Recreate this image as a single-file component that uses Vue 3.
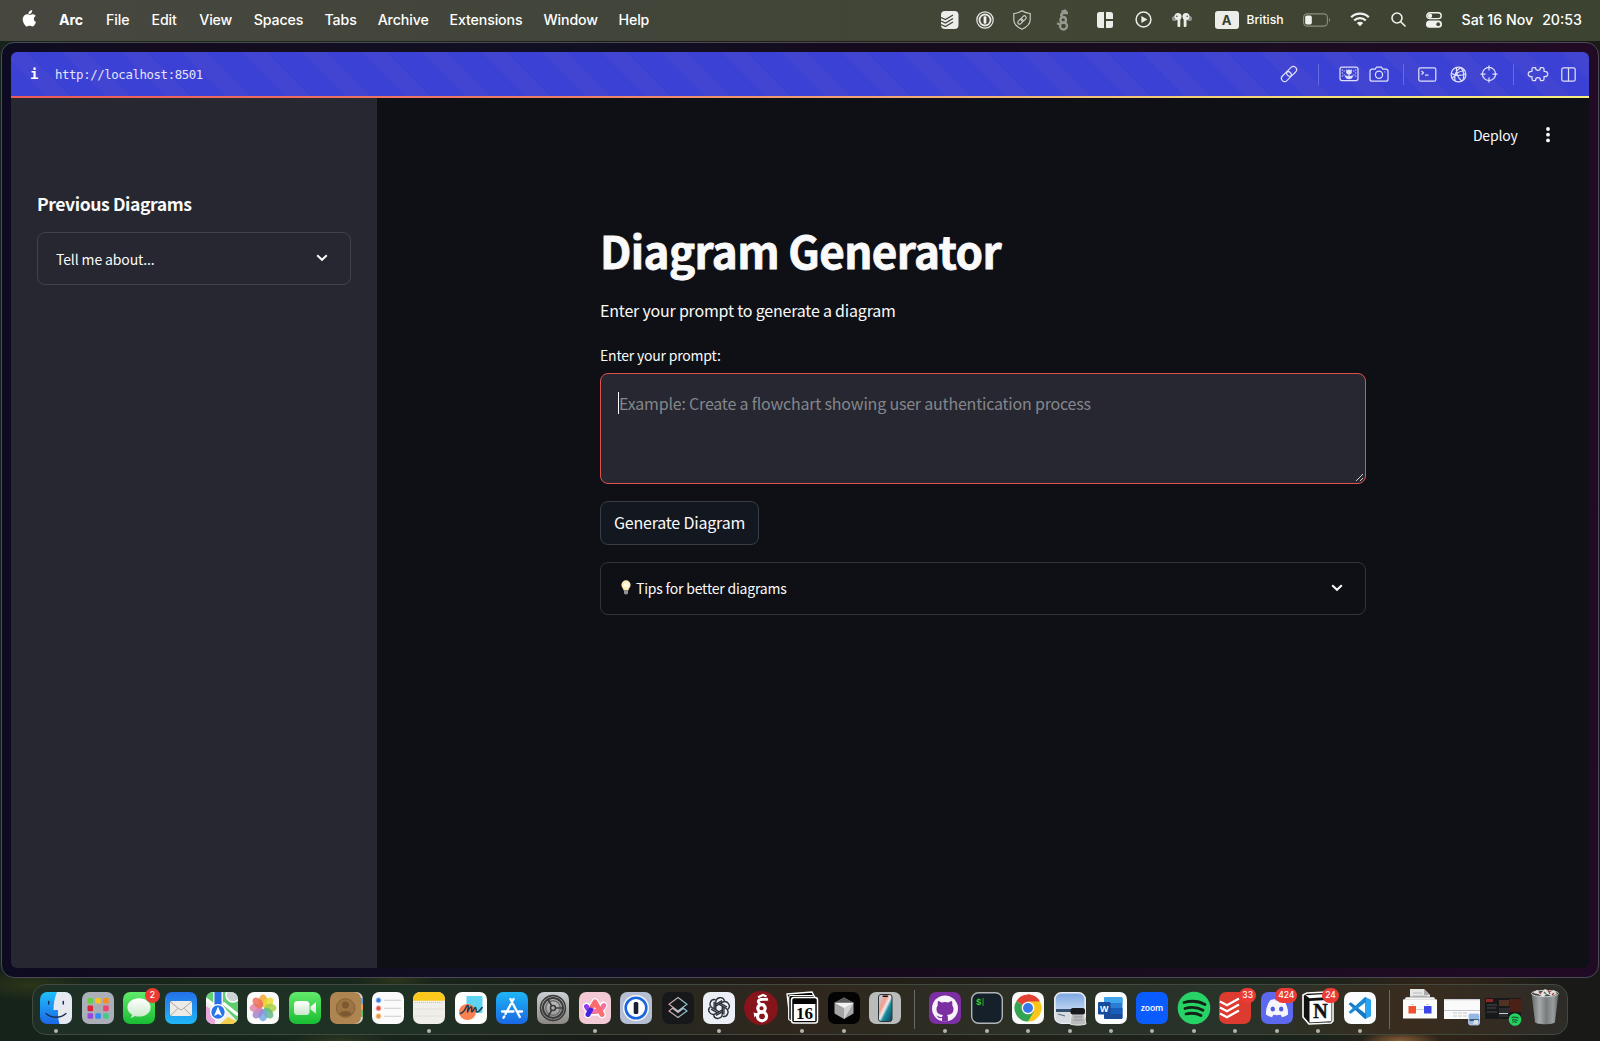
<script setup>
const menus = [
  { label: 'Arc', width: 47, bold: true },
  { label: 'File', width: 45.5 },
  { label: 'Edit', width: 47.7 },
  { label: 'View', width: 54.5 },
  { label: 'Spaces', width: 70.8 },
  { label: 'Tabs', width: 53.2 },
  { label: 'Archive', width: 71.8 },
  { label: 'Extensions', width: 94 },
  { label: 'Window', width: 75 },
  { label: 'Help', width: 40 },
]
const petals = [
  ['#f5a623', 0], ['#e9d92f', 45], ['#a6cf3c', 90], ['#5cb77c', 135],
  ['#6fa5df', 180], ['#9b7fd0', 225], ['#dd7fa8', 270], ['#ee6850', 315],
]
const pads = ['#62cf45', '#f8c02b', '#f98d24', '#d92338', '#a8acb2', '#f3426e', '#9848dc', '#2f8df5', '#43c989']
</script>

<template>
  <div class="desktop">
    <header class="menubar">
      <svg class="apple" width="16" height="20" viewBox="0 0 16 20"><path fill="#fff" d="M11.2 1c.1 1.200-.4 2.300-1 3-.7.8-1.700 1.300-2.700 1.200-.1-1.100.4-2.200 1-2.900C9.200 1.600 10.300 1.100 11.200 1zM14.600 7.100c-1 .6-1.700 1.600-1.700 2.800 0 1.400.9 2.600 2.100 3.100-.3.9-.7 1.700-1.200 2.400-.7 1-1.400 2-2.500 2s-1.400-.6-2.600-.6-1.600.6-2.600.7c-1.100 0-1.900-1.100-2.600-2.100C1.900 13.100.9 9.500 2.700 7.300c.8-1.300 2-2 3.300-2 1.200 0 2 .7 3 .7.9 0 1.900-.8 3.300-.7.9.1 1.800.6 2.300 1.800z"/></svg>
      <nav class="menus">
        <span v-for="m in menus" :key="m.label" :class="{ strong: m.bold }" :style="{ width: m.width + 'px' }">{{ m.label }}</span>
      </nav>
      <div class="status">
        <svg class="st" width="18" height="18" viewBox="0 0 18 18"><rect width="17.500" height="18" rx="4" fill="#ececea"/><path d="M0 6.500l4.500 2L12 4M0 10l4.500 2L12 7.500M0 13.500l4.500 2L12 11" fill="none" stroke="#43463a" stroke-width="1.300"/></svg>
        <svg class="st" width="18" height="18" viewBox="0 0 18 18"><circle cx="9" cy="9" r="8.200" fill="none" stroke="#e8e9e4" stroke-width="1.200"/><circle cx="9" cy="9" r="6.500" fill="#e8e9e4"/><circle cx="9" cy="9" r="4.600" fill="#43463a"/><rect x="7.600" y="5.200" width="2.800" height="7.600" rx="1" fill="#f4f4f0"/></svg>
        <svg class="st" width="20" height="20" viewBox="0 0 20 20" fill="none" stroke="#d2d4cb" stroke-width="1.100"><path d="M10 .8c2.500 1.700 5 2.500 8.200 2.700v6c0 4.500-3.200 7.500-8.200 9.700C5 17 1.800 14 1.800 9.500v-6C5 3.300 7.500 2.500 10 .8z"/><g transform="rotate(-45 10 10)"><rect x="4.800" y="8.200" width="6" height="3.600" rx="1.800"/><rect x="9.200" y="8.200" width="6" height="3.600" rx="1.800"/></g></svg>
        <svg class="st" width="14" height="22" viewBox="0 0 14 22" fill="none" stroke="#969a8e" stroke-width="2.300"><circle cx="7.500" cy="17" r="3.500"/><circle cx="7.200" cy="11" r="2.800"/><path d="M9.500 8.300C4 8 4 4.200 7.500 4.200h4.500M5.500 2.800L9 1.500l2 2M1 14.300l3.500 1.500"/></svg>
        <svg class="st" width="16" height="16" viewBox="0 0 16 16" fill="#ecede8"><path d="M2.500 0H7v16H2.500A2.500 2.500 0 010 13.500v-11A2.500 2.500 0 012.500 0zM9 0h4.500A2.500 2.500 0 0116 2.500V7H9zM9 9h7v4.500a2.500 2.500 0 01-2.500 2.500H9z"/></svg>
        <svg class="st" width="17" height="17" viewBox="0 0 17 17"><circle cx="8.500" cy="8.500" r="7.400" fill="none" stroke="#ecede8" stroke-width="1.500"/><path d="M6.400 5l6 3.500-6 3.500z" fill="#ecede8"/></svg>
        <svg class="st" width="22" height="16" viewBox="0 0 22 16"><circle cx="3.500" cy="6.500" r="2.600" fill="#8f9288"/><circle cx="18.500" cy="6.500" r="2.600" fill="#8f9288"/><g fill="#ecede8"><circle cx="7" cy="4.500" r="3.500"/><rect x="6.500" y="4.500" width="2.800" height="10.500" rx="1"/><circle cx="15" cy="4.500" r="3.500"/><rect x="12.700" y="4.500" width="2.800" height="10.500" rx="1"/></g><circle cx="5.800" cy="4.200" r=".8" fill="#43463a"/><circle cx="16.200" cy="4.200" r=".8" fill="#43463a"/></svg>
        <span class="lang">A</span>
        <span class="british">British</span>
        <svg class="st" width="28" height="14" viewBox="0 0 28 14"><rect x=".6" y=".9" width="23.800" height="12.200" rx="3.600" fill="none" stroke="#8b8e80" stroke-width="1.100"/><rect x="2.200" y="2.600" width="6.600" height="8.800" rx="1.600" fill="#f1f2ee"/><path d="M26 5v4c1.400-.6 1.400-3.400 0-4z" fill="#8b8e80"/></svg>
        <svg class="st" width="20" height="15" viewBox="0 0 20 15" fill="none" stroke="#f1f2ee" stroke-width="2.300"><path d="M1.200 5.300a12.400 12.400 0 0117.600 0M4.200 8.500a8.200 8.200 0 0111.600 0"/><path d="M6.800 11a4.600 4.600 0 016.400 0L10 14.300z" fill="#f1f2ee" stroke="none"/></svg>
        <svg class="st" width="15" height="15" viewBox="0 0 15 15" fill="none" stroke="#f1f2ee" stroke-width="1.600"><circle cx="6" cy="6" r="5"/><path d="M9.700 9.700l4.300 4.300" stroke-linecap="round"/></svg>
        <svg class="st" width="16" height="16" viewBox="0 0 16 16"><rect x=".8" y=".8" width="14.400" height="5.800" rx="2.900" fill="none" stroke="#f1f2ee" stroke-width="1.400"/><circle cx="4" cy="3.700" r="2.200" fill="#f1f2ee"/><rect y="8.600" width="16" height="7.200" rx="3.600" fill="#f1f2ee"/><circle cx="12.200" cy="12.200" r="1.900" fill="#43463a"/></svg>
        <span class="clock"><span>Sat 16 Nov</span><span>20:53</span></span>
      </div>
    </header>

    <main class="window">
      <div class="page">
        <div class="toolbar">
          <span class="info">i</span>
          <span class="url">http://localhost:8501</span>
          <div class="tools">
            <svg width="18" height="18" viewBox="0 0 18 18" class="t1"><g transform="rotate(-45 9 9)"><rect x="-.3" y="5.800" width="11.200" height="6.400" rx="3.200"/><rect x="7.100" y="5.800" width="11.200" height="6.400" rx="3.200"/></g></svg>
            <i class="bar"></i>
            <svg width="20" height="16" viewBox="0 0 20 16" class="t2"><rect x="1" y="1" width="18" height="13.600" rx="2"/><path d="M10 8v5M10 12.500c-2 0-3-1-3.500-2.500 2 0 3 .8 3.500 2.500 .5-1.700 1.500-2.500 3.500-2.500-.5 1.500-1.500 2.500-3.500 2.500"/><path d="M7.200 3.200L9 4.300l1-1.300 1 1.300 1.800-1.100v3c0 1.400-1 2-2.800 2s-2.800-.6-2.800-2z" fill="#e3e4fb" stroke="none"/><path d="M3.400 3.500v9M16.600 3.500v9" stroke-dasharray="1 2"/><path d="M5.200 4.500v8M14.800 4.500v8" stroke-dasharray="1 3"/></svg>
            <svg width="20" height="16" viewBox="0 0 20 16" class="t3"><path d="M3 3.200h3.200L7.600 1h4.800l1.400 2.200H17a2 2 0 012 2v8a2 2 0 01-2 2H3a2 2 0 01-2-2v-8a2 2 0 012-2z"/><circle cx="10" cy="8.800" r="3.600"/><path d="M15.500 5.800h.8"/></svg>
            <i class="bar"></i>
            <svg width="19" height="15" viewBox="0 0 19 15" class="t4"><rect x=".8" y=".8" width="17" height="13.400" rx="1.800"/><path d="M3.500 4l2 1.700-2 1.700M7 8h3.500"/></svg>
            <svg width="17" height="17" viewBox="0 0 17 17" class="t5"><circle cx="8.500" cy="8.500" r="7.400"/><path d="M6.500 1.400c-.6 5 1.500 10.500 5.500 13.800M10.500 1.400C6 4.500 4 9.500 5 15M1.200 7.200c5 2.800 9.800 2.800 14.500.6M2.200 12.500c3-5 8-7.500 12-8M10.500 1.400c3.500 3.500 4 8 2.500 12.500"/></svg>
            <svg width="18" height="18" viewBox="0 0 18 18" class="t6"><circle cx="9" cy="9" r="6.600"/><path d="M9 .5v5M9 12.500v5M.5 9h5M12.500 9h5"/></svg>
            <i class="bar"></i>
            <svg width="22" height="16" viewBox="0 0 22 16" class="t7"><path d="M6.500 1.500h2c0 2 .8 2.800 2.500 2.800s2.500-.8 2.500-2.800h2c1 0 1.500.6 1.500 1.600v2.200c2.200-.2 3.800.8 3.800 2.700s-1.600 2.900-3.800 2.700v2.200c0 1-.5 1.600-1.500 1.600h-2c0-2-.8-2.800-2.500-2.800s-2.500.8-2.500 2.800h-2c-1 0-1.500-.6-1.500-1.600v-2.200C2.800 10.900 1.200 9.900 1.200 8S2.800 5.100 5 5.300V3.100c0-1 .5-1.600 1.500-1.600z"/></svg>
            <svg width="15" height="15" viewBox="0 0 15 15" class="t8"><rect x=".8" y=".8" width="13.400" height="13.400" rx="1.800"/><path d="M7.500 1v13"/></svg>
          </div>
        </div>
        <div class="progress"></div>

        <div class="body">
          <aside class="sidebar">
            <h3>Previous Diagrams</h3>
            <div class="expander">
              <span class="tell">Tell me about...</span>
              <svg width="12" height="8" viewBox="0 0 12 8"><path d="M1.200 1.200L6 5.800l4.800-4.600"/></svg>
            </div>
          </aside>
          <section class="content">
            <div class="topbar">
              <span class="deploy">Deploy</span>
              <svg width="4" height="16" viewBox="0 0 4 16"><circle cx="2" cy="2" r="1.900"/><circle cx="2" cy="7.700" r="1.900"/><circle cx="2" cy="13.400" r="1.900"/></svg>
            </div>
            <div class="column">
              <h1>Diagram Generator</h1>
              <p>Enter your prompt to generate a diagram</p>
              <label>Enter your prompt:</label>
              <div class="area">
                <i class="caret"></i><span>Example: Create a flowchart showing user authentication process</span>
                <svg class="grip" width="9" height="9" viewBox="0 0 9 9"><path d="M1 8l7-7M5 8l3-3" stroke="#cfcfd2" stroke-width="1" fill="none"/></svg>
              </div>
              <div class="button">Generate Diagram</div>
              <div class="expander tips">
                <svg class="bulb" width="10" height="15" viewBox="0 0 10 15"><path d="M5 .3a4.600 4.600 0 014.600 4.600c0 2.400-1.900 3.300-2.300 5.600H2.700C2.300 8.200.4 7.300.4 4.900A4.600 4.600 0 015 .3z" fill="#fdebb5"/><circle cx="5" cy="5" r="2.600" fill="#fff9e3"/><path d="M3 10.500h4v3q-2 1.800-4 0z" fill="#929498"/></svg>
                <span class="tiptext">Tips for better diagrams</span>
                <svg width="12" height="8" viewBox="0 0 12 8"><path d="M1.200 1.200L6 5.800l4.800-4.600"/></svg>
              </div>
            </div>
          </section>
        </div>
      </div>
    </main>

    <footer class="dock">
      <!-- Finder -->
      <div class="cell run"><svg viewBox="0 0 32 32"><defs><linearGradient id="fin" x2="0" y2="1"><stop stop-color="#1fc0fa"/><stop offset="1" stop-color="#1b66e8"/></linearGradient><clipPath id="tile"><rect width="32" height="32" rx="7.200"/></clipPath></defs><g clip-path="url(#tile)"><path fill="url(#fin)" d="M0 0h32v32H0z"/><path d="M17 0c-2.500 6-3.500 12-3.500 18H18c-.2 5 0 9 1.500 14H32V0z" fill="#e6e9f0"/></g><path d="M8.700 9.500v2.500M23.300 9.500v2.500" stroke="#173052" stroke-width="1.500" stroke-linecap="round"/><path d="M6 21.500c5.500 5 14.500 5 20 0" fill="none" stroke="#173052" stroke-width="1.300" stroke-linecap="round"/></svg></div>
      <!-- Launchpad -->
      <div class="cell"><svg viewBox="0 0 32 32"><rect width="32" height="32" rx="7.200" fill="#abb0b8"/><rect v-for="(c, i) in pads" :key="c" :x="5.500 + (i % 3) * 7.800" :y="6 + Math.floor(i / 3) * 7.600" width="5.600" height="5.600" rx="1.200" :fill="c"/></svg></div>
      <!-- Messages -->
      <div class="cell"><svg viewBox="0 0 32 32"><defs><linearGradient id="grn" x2="0" y2="1"><stop stop-color="#62ea6b"/><stop offset="1" stop-color="#18bd32"/></linearGradient><linearGradient id="wht" x2="0" y2="1"><stop stop-color="#fff"/><stop offset="1" stop-color="#c8e8c8"/></linearGradient></defs><rect width="32" height="32" rx="7.200" fill="url(#grn)"/><path d="M16 6.200c6.600 0 11.600 4 11.600 9.200s-5 9.200-11.600 9.200c-1.500 0-3-.2-4.200-.6-1 1-2.500 1.800-4.200 1.900.9-1 1.300-2 1.300-3.300-2.800-1.700-4.500-4.300-4.500-7.200 0-5.200 5-9.200 11.600-9.200z" fill="url(#wht)"/></svg><b class="badge">2</b></div>
      <!-- Mail -->
      <div class="cell"><svg viewBox="0 0 32 32"><defs><linearGradient id="mail" x2="0" y2="1"><stop stop-color="#2570e8"/><stop offset="1" stop-color="#20b7f7"/></linearGradient></defs><rect width="32" height="32" rx="7.200" fill="url(#mail)"/><rect x="5" y="9" width="22" height="15" rx="2" fill="#eeeae5"/><path d="M5.500 9.800l9 7.400q1.500 1.200 3 0l9-7.400M5.800 23.500l7.200-7.300M26.200 23.500L19 16.200" fill="none" stroke="#9a9590" stroke-width=".8"/></svg></div>
      <!-- Maps -->
      <div class="cell"><svg viewBox="0 0 32 32"><g clip-path="url(#tile)"><path d="M0 0h32v32H0z" fill="#eef0ea"/><path d="M17 0h15v30L17 14z" fill="#5fce6f"/><path d="M0 0h7v12L0 6z" fill="#63cf70"/><path d="M0 14l9 6v12H0z" fill="#e9a7dd"/><path d="M14 32l8-7 10 5v2z" fill="#f4cf4b"/><path d="M17 11l15 12M0 7l12 9" stroke="#fff" stroke-width="3"/><circle cx="27" cy="3" r="7" fill="#cdd3d5" stroke="#fff" stroke-width="1.500"/><path d="M8.500 0h7v14h-7z" fill="#2870e6"/></g><circle cx="12" cy="20" r="7.400" fill="#2874ec" stroke="#fff" stroke-width="1.400"/><path d="M12 14.500l4 9.500-4-2-4 2z" fill="#fff"/></svg></div>
      <!-- Photos -->
      <div class="cell"><svg viewBox="0 0 32 32"><rect width="32" height="32" rx="7.200" fill="#fbfbf9"/><g opacity=".95"><ellipse v-for="p in petals" :key="p[1]" cx="16" cy="8.800" rx="4.300" ry="6.200" :fill="p[0]" opacity=".85" :transform="`rotate(${p[1]} 16 16)`"/></g></svg></div>
      <!-- FaceTime -->
      <div class="cell"><svg viewBox="0 0 32 32"><rect width="32" height="32" rx="7.200" fill="url(#grn)"/><rect x="5" y="9" width="15.500" height="14" rx="3.500" fill="url(#wht)"/><path d="M21.500 14.500l5.500-4.300v11.600l-5.500-4.300z" fill="url(#wht)"/></svg></div>
      <!-- Contacts -->
      <div class="cell"><svg viewBox="0 0 32 32"><rect x="2" width="31" height="32" rx="7" fill="#d7d2c8"/><path d="M30 6h3v6h-3z" fill="#59a7e8"/><path d="M30 12h3v6h-3z" fill="#f1a04b"/><path d="M30 18h3v7h-3z" fill="#60bf6c"/><rect width="31" height="32" rx="7.200" fill="#ae8550"/><circle cx="15.500" cy="16" r="9.300" fill="#9c7442" stroke="#866238"/><circle cx="15.500" cy="13" r="3.400" fill="#7c5931"/><path d="M9.300 22c1-4 11.400-4 12.400 0a9 9 0 01-12.400 0z" fill="#7c5931"/></svg></div>
      <!-- Reminders -->
      <div class="cell"><svg viewBox="0 0 32 32"><rect width="32" height="32" rx="7.200" fill="#fbfbfb"/><g stroke-width="1"><circle cx="6.500" cy="8.300" r="2.500" fill="#317be2" stroke="#a7c7f2"/><circle cx="6.500" cy="16.300" r="2.500" fill="#e34e45" stroke="#f3b2ad"/><circle cx="6.500" cy="24.200" r="2.500" fill="#ef9339" stroke="#f7cfa4"/></g><path d="M12 8.300h17M12 16.300h17M12 24.200h17" stroke="#cbcbcb" stroke-width="1.100"/></svg></div>
      <!-- Notes -->
      <div class="cell run"><svg viewBox="0 0 32 32"><g clip-path="url(#tile)"><path d="M0 0h32v32H0z" fill="#f0eee8"/><path d="M0 0h32v8.700H0z" fill="#fbc81d"/></g><path d="M2 10.500h28" stroke="#bbb" stroke-dasharray="1 1" stroke-width=".8"/><path d="M1 17h30M1 24h30" stroke="#dcdad3" stroke-width=".8"/></svg></div>
      <!-- Freeform -->
      <div class="cell"><svg viewBox="0 0 32 32"><rect width="32" height="32" rx="7.200" fill="#fdfdfd"/><rect x="11.500" y="4" width="16" height="17" rx="1" fill="#5ed4f3"/><ellipse cx="12.500" cy="20" rx="8.500" ry="8" fill="#f9743f" opacity=".9"/><path d="M5.500 21.500c2-.5 4.500-3.500 6-7 .8-1.700 2-1.200 1.800.3l-.8 5.200c1.500-3.300 3-5.500 4-4.800s-.8 4.300.4 4.600c1.100.3 2.300-4.600 3.700-4.200 1.200.5-.3 4.200 1.400 4.400 1.600.2 3-2 5.200-4.500" fill="none" stroke="#1c3a50" stroke-width="1.500" stroke-linecap="round" stroke-linejoin="round"/></svg></div>
      <!-- App Store -->
      <div class="cell"><svg viewBox="0 0 32 32"><defs><linearGradient id="store" x2="0" y2="1"><stop stop-color="#1eb5f5"/><stop offset="1" stop-color="#1968e3"/></linearGradient></defs><rect width="32" height="32" rx="7.200" fill="url(#store)"/><path d="M14.400 7L22 21.500l1.800 3.500M17.600 7L9.500 22M8.300 24.500l-.8 1.200M6 19.500h11.500M21.500 19.500H26" stroke="#fff" stroke-width="2.300" stroke-linecap="round"/></svg></div>
      <!-- System Settings -->
      <div class="cell"><svg viewBox="0 0 32 32"><defs><linearGradient id="gear" x2="0" y2="1"><stop stop-color="#cbd0d4"/><stop offset="1" stop-color="#8b8884"/></linearGradient></defs><rect width="32" height="32" rx="7.200" fill="url(#gear)"/><g fill="none" stroke="#3b3b3c"><circle cx="16" cy="16" r="12.400" stroke-width="1.600"/><circle cx="16" cy="16" r="10" stroke-width="2"/><circle cx="16" cy="16" r="7.300" stroke="#6f6e6d" stroke-width="1.500"/><circle cx="16" cy="16" r="2.500" stroke-width="1.500"/><path d="M18.500 16h8M14.700 13.800L10.800 7M14.700 18.200L10.800 25" stroke-width="1.700"/></g></svg></div>
      <!-- Arc -->
      <div class="cell run"><svg viewBox="0 0 32 32"><rect width="32" height="32" rx="7.200" fill="#f3c9d6"/><path d="M9 22.500L16 10l7 12.500M7.500 14.500c3 7 13 8 17-1" stroke="#fff" stroke-width="7.500" fill="none" stroke-linejoin="round" stroke-linecap="round"/><path d="M7.500 14.500c1.500 3.500 4 5 8 5" fill="none" stroke="#8b3df3" stroke-width="5" stroke-linecap="round"/><path d="M14 19.500c5 .3 9-2 10.800-6" fill="none" stroke="#f5719f" stroke-width="5" stroke-linecap="round"/><path d="M12 16.500L16 10l7 12.500" fill="none" stroke="#fb6b70" stroke-width="5" stroke-linejoin="round" stroke-linecap="round"/><path d="M11.500 18L9 22.500" stroke="#4326e2" stroke-width="5" stroke-linecap="round"/></svg></div>
      <!-- 1Password -->
      <div class="cell"><svg viewBox="0 0 32 32"><rect width="32" height="32" rx="7.200" fill="#b5bed2"/><circle cx="16" cy="16" r="13" fill="#f6f8fc"/><circle cx="16" cy="16" r="10.300" fill="#fff" stroke="#1a66dd" stroke-width="2.600"/><rect x="13.700" y="10" width="4.600" height="12" rx="1.500" fill="#172334"/></svg></div>
      <!-- Layers -->
      <div class="cell"><svg viewBox="0 0 32 32"><defs><linearGradient id="lay"><stop stop-color="#d8a7ac"/><stop offset="1" stop-color="#8fcbdc"/></linearGradient></defs><rect width="32" height="32" rx="7.200" fill="#17181a"/><path d="M16 5.500l9 6.800L16 19l-9-6.700zM7 19l9 6.500 9-6.500-3.500-2.800L16 20.500l-5.500-4.300z" fill="none" stroke="url(#lay)" stroke-width="1.100"/></svg></div>
      <!-- ChatGPT -->
      <div class="cell run"><svg viewBox="0 0 32 32"><rect width="32" height="32" rx="7.200" fill="#eceff6"/><g fill="none" stroke="#2b2f36" stroke-width="1.500" transform="translate(1 1) scale(.94)"><path v-for="n in 6" :key="n" :transform="`rotate(${n * 60} 16 16)`" d="M12.500 18.200V10.200C12.500 4 20.500 3.200 21.800 8.400M12.500 12l6.800-3.900"/></g></svg></div>
      <!-- Wireguard -->
      <div class="cell"><svg viewBox="0 0 32 32"><circle cx="16" cy="16" r="17" fill="#87131b"/><g fill="none" stroke="#fff" stroke-width="3.200"><circle cx="17" cy="24.300" r="4.500"/><circle cx="16.500" cy="16.300" r="3.700"/><path d="M19.500 12.800C12.500 12.500 11.500 8 16 7.500c3-.3 4.500.3 7-.3" stroke-width="2.800"/><path d="M13 5.200l5-2.200 3.500 1.500" stroke-width="2.200"/></g><path d="M8.500 20.500l4.500 1-3.500 4z" fill="#fff"/></svg></div>
      <!-- Calendar -->
      <div class="cell run"><svg viewBox="0 0 32 32"><path d="M1 2l25-2 2 4-2 22-22 1z" fill="#050505" stroke="#fff" stroke-width="1.300"/><rect x="2.700" y="3.500" width="26" height="25" rx="2" fill="#050505" stroke="#fff" stroke-width="1.200"/><rect x="5.500" y="5.500" width="26" height="25.500" rx="2.500" fill="#050505" stroke="#fff" stroke-width="1.500"/><rect x="7.800" y="12" width="21.500" height="17" fill="#fff"/><text x="18.500" y="26.500" text-anchor="middle" font-family="Liberation Serif, serif" font-weight="700" font-size="17" fill="#050505">16</text></svg></div>
      <!-- Cursor -->
      <div class="cell run"><svg viewBox="0 0 32 32"><rect width="32" height="32" rx="7.200" fill="#030303"/><path d="M16 5.500l9.500 5.300v10.700L16 27l-9.500-5.500V10.800z" fill="#a5a5a5"/><path d="M16 5.500l9.500 5.300L16 14l-9.500-3.200z" fill="#595959"/><path d="M6.500 10.800h19L16 27V16z" fill="#f3f3f3"/><path d="M16 16v11l9.500-16.200z" fill="#d2d2d2"/></svg></div>
      <!-- iPhone Mirroring -->
      <div class="cell"><svg viewBox="0 0 32 32"><defs><linearGradient id="ph" x2="1" y2="1"><stop stop-color="#b8ddeb"/><stop offset=".35" stop-color="#f29b8c"/><stop offset=".5" stop-color="#e9eef0"/><stop offset=".62" stop-color="#198b9c"/><stop offset="1" stop-color="#0d3c59"/></linearGradient></defs><rect width="32" height="32" rx="7.200" fill="#b9bcbb"/><rect x="9.500" y="2.500" width="13.500" height="27" rx="2.500" fill="url(#ph)" stroke="#2c3438" stroke-width="1"/><rect x="13.500" y="3.500" width="5.500" height="1.500" rx=".7" fill="#111"/></svg></div>
      <i class="sep"></i>
      <!-- GitHub Desktop -->
      <div class="cell run"><svg viewBox="0 0 32 32"><rect width="32" height="32" rx="7.200" fill="#7c2ea3"/><circle cx="16" cy="16.500" r="13" fill="#f6f4f8"/><path d="M13 29.600v-3.500c-4 .7-4-1.500-5.500-2.300 2-.5 2.500 1.800 5.600 1.300.1-1 .4-1.600.9-2-3.800-.4-6.500-1.800-6.500-6 0-1.500.5-2.600 1.300-3.500-.2-.8-.3-2 .2-4.500 1.300 0 2.600.8 3.400 1.500a14 14 0 017.200 0c.8-.7 2.100-1.500 3.400-1.500.5 2.500.4 3.700.2 4.500.8.9 1.300 2 1.300 3.500 0 4.200-2.700 5.600-6.500 6 .6.500.9 1.400.9 2.700v3.800z" fill="#7c2ea3"/></svg></div>
      <!-- iTerm -->
      <div class="cell run"><svg viewBox="0 0 32 32"><rect x=".7" y=".7" width="30.600" height="30.600" rx="6.800" fill="#15202a" stroke="#b1b5b8" stroke-width="1.400"/><text x="5" y="13" font-family="Liberation Mono, monospace" font-weight="700" font-size="9" fill="#35d32e">$</text><path d="M12 6v8" stroke="#257a34" stroke-width="1.500"/></svg></div>
      <!-- Chrome -->
      <div class="cell run"><svg viewBox="0 0 32 32"><rect width="32" height="32" rx="7.200" fill="#fafafa"/><path d="M16 16L4.300 9.200A13.500 13.500 0 0127.700 9.200z" fill="#e44134"/><path d="M16 16V9.200h11.700A13.500 13.500 0 0116 29.500z" fill="#fbc51b"/><path d="M16 16l5.900 3.400L16 29.500A13.500 13.500 0 014.300 9.200z" fill="#35a452"/><path d="M16 9.200h11.700C25 4.500 20 2.400 16 2.500z" fill="#e44134"/><circle cx="16" cy="16" r="6.300" fill="#fff"/><circle cx="16" cy="16" r="5" fill="#3978e8"/></svg></div>
      <!-- Preview -->
      <div class="cell run"><svg viewBox="0 0 32 32"><defs><linearGradient id="sky" x2="0" y2="1"><stop stop-color="#7ba5e2"/><stop offset=".6" stop-color="#c2d6f1"/></linearGradient></defs><rect x=".8" y=".8" width="30.400" height="30.400" rx="6.500" fill="url(#sky)" stroke="#e9edf2" stroke-width="1.600"/><path d="M2 17h28v3H2z" fill="#35506d"/><path d="M2 20h28v5.500c0 4-2 4.500-5 4.500H8c-4 0-6-1-6-5z" fill="#d6dbe0"/><path d="M4 22l7 2" stroke="#5d7287" stroke-width="1.200"/><path d="M17.500 22h12.500l2 10c-4 1.500-12 1.500-16 0z" fill="#b9bbbc" stroke="#e7e7e7"/><path d="M20 25h8M19.500 28h9" stroke="#8f9294"/><rect x="16.500" y="16" width="14.500" height="6.500" rx="2.500" fill="#17191c"/></svg></div>
      <!-- Word -->
      <div class="cell run"><svg viewBox="0 0 32 32"><rect width="32" height="32" rx="7.200" fill="#fbfcfe"/><rect x="9" y="5" width="18.500" height="22" rx="1.500" fill="#2b7cd3"/><path d="M9 6.500a1.500 1.500 0 011.500-1.500H26a1.500 1.500 0 011.500 1.500V11H9z" fill="#41a5ee"/><path d="M9 21.500h18.500v4A1.500 1.500 0 0126 27H10.500A1.500 1.500 0 019 25.500z" fill="#1b4a9b"/><path d="M9 16h18.500v5.500H9z" fill="#195ebb"/><rect x="3" y="10" width="12.500" height="12.500" rx="1.200" fill="#164c9d"/><text x="9.200" y="19.700" text-anchor="middle" font-family="Liberation Sans, sans-serif" font-weight="700" font-size="9" fill="#fff">W</text></svg></div>
      <!-- Zoom -->
      <div class="cell run"><svg viewBox="0 0 32 32"><rect width="32" height="32" rx="7.200" fill="#0b5cff"/><text x="16" y="18.500" text-anchor="middle" font-family="Open Sans, sans-serif" font-weight="600" font-size="8.600" fill="#fff" textLength="22.500">zoom</text></svg></div>
      <!-- Spotify -->
      <div class="cell run"><svg viewBox="0 0 32 32"><circle cx="16" cy="16" r="16.300" fill="#27d366"/><path d="M6 10.500c7-2 15-1.300 21 2M7 16.500c6-1.700 13-1 18 1.800M8 22c5.500-1.300 11-.7 15 1.500" fill="none" stroke="#142217" stroke-width="2.800" stroke-linecap="round"/></svg></div>
      <!-- Todoist -->
      <div class="cell run"><svg viewBox="0 0 32 32"><rect width="32" height="32" rx="7.200" fill="#dd3b30"/><path d="M1 9.500l7 3.800L20 6.500M1 15.500l7 3.800 12-6.800M1 21.500l7 3.800 12-6.800" fill="none" stroke="#fff" stroke-width="2.200"/></svg><b class="badge">33</b></div>
      <!-- Discord -->
      <div class="cell run"><svg viewBox="0 0 32 32"><rect width="32" height="32" rx="7.200" fill="#5c68ee"/><path d="M9 8.500c2-1 3.500-1.300 5-1.500l.7 1.500h2.600L18 7c1.500.2 3 .5 5 1.500 3 4.500 4.300 9 4 14-2 1.500-4 2.300-6 2.700l-1.400-2.400a15 15 0 01-7.200 0L11 25.200c-2-.4-4-1.200-6-2.700-.3-5 1-9.500 4-14z" fill="#f4f5fd"/><ellipse cx="11.800" cy="17" rx="2.200" ry="2.500" fill="#4f5bdd"/><ellipse cx="20.200" cy="17" rx="2.200" ry="2.500" fill="#4f5bdd"/></svg><b class="badge">424</b></div>
      <!-- Notion -->
      <div class="cell run"><svg viewBox="0 0 32 32"><path d="M1 3L5 1l20-1 6 5v24l-2 2-22 1-6-7z" fill="#111" stroke="#fff" stroke-width="1.600" stroke-linejoin="round"/><path d="M7.500 9l22-1.200v21.500l-22 1.200z" fill="#fdfdfd"/><path d="M3.500 3.200l20-1.200 4 3-20 1.200z" fill="#fdfdfd"/><text x="18.500" y="26" text-anchor="middle" font-family="Liberation Serif, serif" font-weight="700" font-size="20" fill="#111" stroke="#111" stroke-width=".5">N</text></svg><b class="badge">24</b></div>
      <!-- VS Code -->
      <div class="cell run"><svg viewBox="0 0 32 32"><rect width="32" height="32" rx="7.200" fill="#fbfdff"/><path d="M21 5l6 2.700v16.600L21 27z" fill="#2ba4ef"/><path d="M4.500 12l2.200-1.700L22 22v5h-1z" fill="#1778c6"/><path d="M4.500 20l2.200 1.700L22 10V5h-1z" fill="#1b8ad6"/></svg></div>
      <i class="sep last"></i>
      <!-- Minimised windows -->
      <div class="cell"><svg class="mini" viewBox="0 0 36 38"><path d="M8 1h14l6 6v11H8z" fill="#e6e6e6"/><path d="M22 1v6h6z" fill="#aaa"/><path d="M11 5h9M11 8h14" stroke="#aaa" stroke-width=".7"/><path d="M4 9h28l2 3H2z" fill="#f4f4f4" stroke="#444" stroke-width=".5"/><rect x="1" y="11.500" width="34" height="19" fill="#fbfbfb"/><rect x="6.500" y="18" width="7.500" height="7.500" fill="#f0502f"/><rect x="22" y="18" width="7.500" height="7.500" fill="#3c45e8"/><path d="M14 21.500h8M9 16.500h3M24 16.500h3" stroke="#bbb" stroke-width=".7"/></svg></div>
      <div class="cell"><svg class="mini" viewBox="0 0 36 38"><rect y="11" width="36" height="20" fill="#fafafa"/><path d="M0 11.700h36M0 22.500h36" stroke="#aab" stroke-width=".7"/><path d="M9 25h14M9 28h14" stroke="#c6c6c6" stroke-width="1" stroke-dasharray="4 1"/><rect x="24.500" y="25.500" width="11" height="11.500" rx="2" fill="#94b8e5" stroke="#dde" stroke-width=".7"/><path d="M25.500 31h9v2h-9z" fill="#385875"/><path d="M30 32h4v4h-5z" fill="#ddd"/></svg></div>
      <div class="cell"><svg class="mini" viewBox="0 0 36 38"><rect y="10" width="36" height="21" fill="#17191b"/><path d="M1 11h7v3H1z" fill="#93262a"/><path d="M14 12h10v6H14z" fill="#503325"/><path d="M24 11h12v13H25z" fill="#4a2017"/><path d="M2 17h10M2 20h9M2 24h10" stroke="#4c4c4c"/><path d="M14 20h11v5H14zM14 26h9v3h-9z" fill="#292c2f"/><path d="M14 25.500h9" stroke="#ccc"/><circle cx="30" cy="31.500" r="6.300" fill="#22d35e"/><path d="M26.700 29.500c2.500-.7 5-.4 7 .7M27 32c2-.5 4-.3 5.800.6M27.400 34c1.700-.4 3-.2 4.500.4" fill="none" stroke="#143d22" stroke-width="1"/></svg></div>
      <div class="cell"><svg class="mini" viewBox="0 0 36 38"><defs><linearGradient id="bin"><stop stop-color="#666b6d"/><stop offset=".3" stop-color="#a5a9aa"/><stop offset=".55" stop-color="#777c7e"/><stop offset=".8" stop-color="#999e9f"/><stop offset="1" stop-color="#5d6263"/></linearGradient></defs><path d="M4.500 5h27L28 34c-.2 3-19.800 3-20 0z" fill="url(#bin)"/><ellipse cx="18" cy="5.500" rx="13.600" ry="3.200" fill="#444" stroke="#c6c9c9"/><path d="M6 5l4-3 4 3 4-4 5 3 4-2 3 4-6 2-4-2-4 3-5-3z" fill="#e4e4e2"/><path d="M12 4l2 2M21 2l2 4M27 5l-2 2" stroke="#a33c3c" stroke-width="1.300"/><path d="M17 4l2 2" stroke="#46705b" stroke-width="1.500"/></svg></div>
    </footer>
  </div>
</template>

<style>
body { margin: 0; background: #171b16; }
</style>

<style scoped>
.desktop {
  width: 1600px; height: 1041px; overflow: hidden; box-sizing: border-box;
  display: flex; flex-direction: column;
  font-family: Inter, sans-serif; color: #fff;
  background:
    radial-gradient(ellipse 40px 10px at 1400px 1041px, #8a5f38, transparent),
    radial-gradient(ellipse 130px 70px at 1440px 1010px, #3c2717, transparent),
    radial-gradient(ellipse 60px 16px at 30px 985px, #2c3518, transparent),
    radial-gradient(ellipse 50px 10px at 340px 1041px, #2e3822, transparent),
    radial-gradient(ellipse 40px 12px at 395px 980px, #2c3519, transparent),
    linear-gradient(90deg, #16231a 0, #18271c 22%, #191c18 38%, #241c16 50%, #202219 64%, #1b241c 80%, #191917 100%);
}
.menubar {
  height: 40.500px; flex: none; display: flex; align-items: center; box-sizing: border-box;
  padding: 0 0 1px 21px; background: linear-gradient(90deg, #47473f 0, #42453a 35%, #414634 70%, #3d4331 100%);
  font-size: 14.200px; font-weight: 500;
}
.apple { margin-right: 22px; margin-top: -1px; }
.menus { display: flex; letter-spacing: -.12px; }
.menus span { white-space: nowrap; }
.strong { font-weight: 700; }
.status { display: flex; align-items: center; margin-left: auto; padding-right: 18px; height: 40px; }
.status .st { flex: none; margin-right: 16.500px; }
.status .st:nth-child(2) { margin-right: 18.500px; }
.status .st:nth-child(3) { margin-right: 24px; }
.status .st:nth-child(4) { margin-right: 26.500px; }
.status .st:nth-child(5) { margin-right: 22px; }
.status .st:nth-child(6) { margin-right: 19.500px; }
.status .st:nth-child(7) { margin-right: 21.500px; }
.lang {
  width: 24px; height: 18px; line-height: 18px; border-radius: 3px; background: #ecede9; color: #3b3e33;
  text-align: center; font-size: 13px; font-weight: 700; margin-right: 8px;
}
.british { font-size: 12.200px; width: 56px; }
.status .st:nth-child(10) { margin-right: 19px; }
.status .st:nth-child(11) { margin-right: 21px; }
.status .st:nth-child(12) { margin-right: 20px; }
.status .st:nth-child(13) { margin-right: 20px; }
.clock { display: flex; gap: 9px; white-space: nowrap; }

.window {
  flex: none; width: 1598px; height: 936px; margin: 1.500px auto 0; box-sizing: border-box; padding: 9px;
  border: 1px solid #4b4a54; border-radius: 13px;
  background: linear-gradient(90deg, #0d0b22 0, #140c1e 10%, #101024 35%, #160a1d 55%, #1a0d20 75%, #210a25 100%);
}
.page { height: 916px; border-radius: 6px; overflow: hidden; background: #0f1015; display: flex; flex-direction: column; }
.toolbar {
  height: 44px; flex: none; display: flex; align-items: center; padding: 0 13px 0 19px;
  background: repeating-linear-gradient(45deg, #3c41d5 0, #3c41d5 24px, #4145d2 25px, #4145d2 42.400px);
}
.info { font: 700 14px 'DejaVu Sans Mono', monospace; width: 25px; }
.url { font: 12.400px 'DejaVu Sans Mono', monospace; letter-spacing: -.42px; color: #e4e4fa; }
.tools { margin-left: auto; display: flex; align-items: center; }
.tools svg { fill: none; stroke: #dedffa; stroke-width: 1.250; stroke-linejoin: round; }
.bar { width: 1px; height: 21px; background: #686be0; }
.t1 { margin-right: 20px; }
.t2 { margin: 0 10px 0 20px; }
.t3 { margin-right: 14px; }
.t4 { margin: 0 13px 0 14px; }
.t5 { margin-right: 13px; }
.t6 { margin-right: 15px; }
.t7 { margin: 0 12px 0 13px; }
.progress { height: 2px; flex: none; background: linear-gradient(90deg, #ec5b58 0, #ec8068 35%, #f2b078 60%, #f6e27c 85%, #f7ef83 100%); }

.body { flex: 1; display: flex; font-family: 'Noto Sans CJK SC', sans-serif; color: #fafafa; min-height: 0; letter-spacing: -.2px; }
.sidebar { width: 366px; box-sizing: border-box; background: #262730; padding: 92px 26px 0; flex: none; }
h3 { margin: 0 0 14px; font-size: 17.600px; line-height: 28px; font-weight: 700; white-space: nowrap; letter-spacing: -.42px; }
.expander {
  height: 53px; box-sizing: border-box; border: 1px solid #41424b; border-radius: 8px;
  display: flex; align-items: center; padding: 0 22px 0 18px; font-size: 14px;
}
.tell { letter-spacing: -.13px; }
.tiptext { margin-top: -1px; }
.expander svg:last-child { margin-left: auto; fill: none; stroke: #fafafa; stroke-width: 2; margin-top: -2px; }
.content { flex: 1; display: flex; flex-direction: column; align-items: center; }
.topbar { height: 75px; width: 100%; box-sizing: border-box; padding: 0 39.500px 1.500px 0; display: flex; align-items: center; justify-content: flex-end; }
.deploy { font-size: 14px; margin-right: 28px; }
.topbar svg { fill: #fafafa; }
.column { width: 766px; display: flex; flex-direction: column; align-items: flex-start; padding-top: 48px; }
h1 { margin: 0; font-size: 44px; line-height: 58px; font-weight: 700; white-space: nowrap; letter-spacing: -.62px; -webkit-text-stroke: .8px #fafafa; }
p { margin: 17px 0 19px; font-size: 16px; line-height: 28px; }
label { font-size: 14px; line-height: 24px; margin-bottom: 6px; }
.area {
  position: relative; width: 766px; height: 111px; box-sizing: border-box; border: 1px solid #e2514f; border-radius: 8px;
  background: #262730; padding: 16px 17px; font-size: 16px; line-height: 26px; color: #85868b; display: flex; margin-bottom: 17px;
}
.caret { width: 1px; height: 22px; margin-top: 2px; background: #fafafa; }
.grip { position: absolute; right: 1px; bottom: 1px; }
.button {
  height: 44px; width: 159px; box-sizing: border-box; border: 1px solid #3a3c46; border-radius: 8px; background: #131720;
  font-size: 16px; line-height: 41px; text-align: center; margin-bottom: 17px; white-space: nowrap;
}
.tips { width: 766px; border-color: #32333b; }
.bulb { margin: -2px 5px 0 2px; }

.dock {
  width: 1536px; height: 51px; margin: 5.500px auto 0; box-sizing: border-box; flex: none; display: flex;
  border: 1px solid #424a40; border-radius: 14px; padding-left: 2.500px;
  background: linear-gradient(90deg, #1e3025 0, #1f3024 25%, #252820 38%, #30271e 50%, #2c3025 64%, #28332a 78%, #392c1e 90%, #2d2c28 100%);
}
.cell { position: relative; width: 41.450px; height: 49px; flex: none; display: flex; flex-direction: column; align-items: center; padding-top: 7.500px; box-sizing: border-box; }
.cell > svg { width: 32px; height: 32px; flex: none; overflow: visible; }
.cell > svg.mini { width: 36px; height: 38px; margin-top: -4px; }
.run::after { content: ''; width: 4px; height: 4px; border-radius: 2px; background: #b1b5ae; margin-top: 5px; }
.badge {
  position: absolute; right: 0; top: 3.500px; min-width: 15px; height: 15px; line-height: 15px; border-radius: 8px;
  background: #ec3b34; color: #fff; font-size: 8.500px; font-weight: 500; text-align: center; box-sizing: border-box; padding: 0 3px;
}
.sep { width: 1px; height: 39px; margin: 5px 9px 0 8.800px; background: #676c63; flex: none; }
.sep.last { margin: 5px 9.200px 0; }
</style>
